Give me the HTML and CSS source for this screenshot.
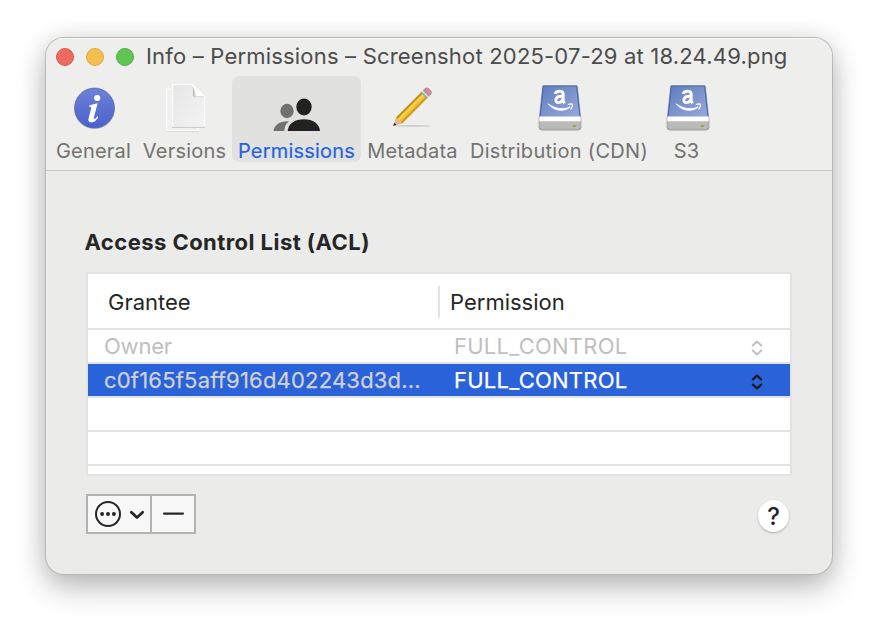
FILE: index.html
```html
<!DOCTYPE html>
<html lang="en">
<head>
<meta charset="utf-8">
<title>Info</title>
<link rel="stylesheet" href="styles.css">
</head>
<body>
<svg width="0" height="0" class="defs" aria-hidden="true">
  <defs>
    <linearGradient id="blue" x1="0" y1="0" x2="0" y2="1"><stop offset="0" stop-color="#6c82d8"/><stop offset="1" stop-color="#4b60cd"/></linearGradient>
    <linearGradient id="paper" x1="0" y1="0" x2="1" y2="1"><stop offset="0" stop-color="#e6e6e6"/><stop offset="1" stop-color="#f3f3f3"/></linearGradient>
    <linearGradient id="top" x1="0" y1="0" x2="1" y2="1"><stop offset="0" stop-color="#5f7cc0"/><stop offset=".5" stop-color="#7d93cd"/><stop offset="1" stop-color="#98a8d9"/></linearGradient>
    <linearGradient id="front" x1="0" y1="0" x2="0" y2="1"><stop offset="0" stop-color="#c4c4c4"/><stop offset="1" stop-color="#b9b9b9"/></linearGradient>
    <linearGradient id="shade" x1="0" y1="0" x2="1" y2="0"><stop offset="0" stop-color="#999" stop-opacity=".8"/><stop offset="1" stop-color="#bbb" stop-opacity="0"/></linearGradient>
    <symbol id="drive" viewBox="0 0 48 48">
      <path d="M3 42q0 3 3 3h36q3 0 3-3" fill="none" stroke="#999" stroke-width="1"/>
      <path d="M6.7 0.8h34.6L45 35v6.5q0 2.8-3 2.8H6q-3 0-3-2.8v-6.5Z" fill="url(#front)" stroke="#8f9296" stroke-width=".6"/>
      <path d="M7 1h34l3.5 31h-41Z" fill="url(#top)"/>
      <path d="M7 1h34" stroke="#4c6297" stroke-width="1"/>
      <path d="M7.2 2 4.2 31M40.8 2l3 29" stroke="#4a68bd" stroke-width="1.2"/>
      <path d="M3.7 31.5h40.6l.5 4.7H3.2Z" fill="#fff"/>
      <ellipse cx="38.3" cy="41" rx="1.8" ry=".9" fill="#999b32"/>
      <path d="M12.2 18.9c6.2 7.6 16.3 8.2 22 3-6.8 3-14.8 2.2-22-3Z" fill="#fff" stroke="#fff" stroke-width=".9" stroke-linejoin="round"/>
      <path d="M32.2 19.4q3.9-1.2 4.2 0t-1.4 4.6" fill="none" stroke="#fff" stroke-width="1.2" stroke-linecap="round"/>
      <path d="M27.2 8.6v6.3q0 1.7 1.4 3.3M27.2 11.3h-2c-6.5.1-6.7 6.3-2.7 6.3 2.6 0 4.7-1.8 4.7-6.3ZM19.3 9.1c.7-4 7.9-4 7.9.2" fill="none" stroke="#fff" stroke-width="2.9"/>
    </symbol>
    <symbol id="updown" viewBox="0 0 12 16"><path d="M1.8 5.5 6 1.6l4.2 3.9M1.8 10.5 6 14.4l4.2-3.9" fill="none" stroke="currentColor" stroke-width="2.1" stroke-linecap="round" stroke-linejoin="round"/></symbol>
  </defs>
</svg>
<main class="window">
  <header class="head">
    <div class="titlebar">
      <i class="light red"></i><i class="light yellow"></i><i class="light green"></i>
      <h1 class="title">Info – Permissions – Screenshot 2025-07-29 at 18.24.49.png</h1>
    </div>
    <nav class="tabs">
      <div class="tab general">
        <svg class="icon" viewBox="0 0 48 56"><circle cx="24.5" cy="32.9" r="20.2" fill="#999" opacity=".6"/><circle cx="24.5" cy="32" r="19.9" fill="url(#blue)" stroke="#5365b5" stroke-width=".8"/><circle cx="27.2" cy="22" r="3.1" fill="#fff"/><path d="M19.3 29.5q3.9-1.2 8.3-2.3l-3.7 14.4q-.4 1.7.6 1.4 1-.3 2.8-2.8l1 .7q-2.8 5.2-6.5 5.4-4.4.2-3.2-4.4l2.7-9.7q.5-1.6-2.2-1.5Z" fill="#fff"/></svg>
        <span>General</span>
      </div>
      <div class="tab versions">
        <svg class="icon" viewBox="0 0 48 56"><path d="M5.5 13.2h31.8v41.5H5.5Z" fill="#f0f0f0" stroke="#fff" stroke-width="1.2"/><path d="M5 55.6h33" stroke="#cfcfcf" stroke-width=".8"/><path d="M11.5 8.5H31l12.5 12v30h-32Z" fill="url(#paper)" stroke="#fff" stroke-width="1.2"/><path d="M11 51.2h33" stroke="#b8b8b8" stroke-width=".9"/><path d="M32 10.5 43 20.5H32Z" fill="#fff"/><path d="M32 20.5V10.5L36 20.5Z" fill="url(#shade)"/><path d="M32 20.7h11" stroke="#ccc" stroke-width=".7"/></svg>
        <span>Versions</span>
      </div>
      <div class="tab permissions active">
        <svg class="icon" viewBox="0 0 48 56"><g fill="#717171"><ellipse cx="15" cy="35" rx="6.7" ry="7.2"/><path d="M1.5 55c.5-6 7-10.2 15.5-9.6-3.4 2.4-4.2 5.2-4.7 9.6Z"/></g><g fill="#212121"><ellipse cx="32" cy="31" rx="7.7" ry="8.5"/><path d="M15.6 55C16.6 47 23 43.2 32 43.2s15.2 4 16 11.8Z"/></g></svg>
        <span>Permissions</span>
      </div>
      <div class="tab metadata">
        <svg class="icon" viewBox="0 0 48 56"><ellipse cx="25" cy="49.9" rx="18" ry=".9" fill="#ccc"/><path d="m8 41.5 6.2 6L5.2 49.8Z" fill="#e2b78f"/><path d="m6.3 46.7 2.3 2.2-3.5 1Z" fill="#333"/><path d="M8 41.5 34 15.4l6 5.8-25.8 26.3Z" fill="#efc035"/><path d="m8 41.5 26-26.1 1.3 1.3L9.4 42.8Z" fill="#c18d21"/><path d="m12.8 46.1 25.8-26.2 1.4 1.3-25.8 26.3Z" fill="#d19a24"/><path d="m11 43.6 25.3-25.5" stroke="#f7da63" stroke-width="1.4"/><path d="m32.7 16.7 3.3-3.3 6.1 6-3.4 3.4Z" fill="#a1a5a5"/><path d="m34.2 15.1 6.2 6.1" stroke="#e8eaea" stroke-width="1.1"/><path d="m35.8 13.6 1.4-1.4q2.3-1.2 4.7 1.2t1.2 4.6l-1.2 1.4Z" fill="#d98ca0" stroke="#a96b7b" stroke-width=".5"/></svg>
        <span>Metadata</span>
      </div>
      <div class="tab distribution"><svg class="icon drive"><use href="#drive"/></svg><span>Distribution (CDN)</span></div>
      <div class="tab s3"><svg class="icon drive"><use href="#drive"/></svg><span>S3</span></div>
    </nav>
  </header>
  <section class="content">
    <h2 class="heading">Access Control List (ACL)</h2>
    <div class="table">
      <div class="row columns"><span class="grantee">Grantee</span><span class="permission">Permission</span></div>
      <div class="row owner"><span class="grantee">Owner</span><span class="permission">FULL_CONTROL</span><svg class="arrows"><use href="#updown"/></svg></div>
      <div class="row selected"><span class="grantee">c0f165f5aff916d402243d3d...</span><span class="permission">FULL_CONTROL</span><svg class="arrows"><use href="#updown"/></svg></div>
      <div class="row"></div>
      <div class="row"></div>
      <div class="last"></div>
    </div>
    <footer class="footer">
      <div class="buttons">
        <button class="more" aria-label="Actions"><svg width="62" height="36" viewBox="0 0 62 36" fill="none" stroke="#262626"><circle cx="20" cy="18" r="12" stroke-width="2"/><g fill="#262626" stroke="none"><circle cx="14.1" cy="18" r="2"/><circle cx="20" cy="18" r="2"/><circle cx="25.9" cy="18" r="2"/></g><path d="m43.3 16.2 5.7 5.3 5.7-5.3" stroke-width="2.7" stroke-linecap="round" stroke-linejoin="round"/></svg></button>
        <button class="remove" aria-label="Remove"><svg width="42" height="36" viewBox="0 0 42 36"><path d="M12 17.6h19" stroke="#262626" stroke-width="2.1" stroke-linecap="round"/></svg></button>
      </div>
      <button class="help">?</button>
    </footer>
  </section>
</main>
</body>
</html>
```
FILE: styles.css
```css
* { box-sizing: border-box; }
body { margin: 0; width: 878px; height: 628px; padding: 38px 46px; overflow: hidden; background: #fff; font-family: Inter, sans-serif; color: #262626; }
h1, h2 { margin: 0; }
button { margin: 0; padding: 0; border: 0; font-family: inherit; color: inherit; }
.defs { position: absolute; }
.window { width: 786px; height: 536px; border-radius: 18px; overflow: hidden; background: #ebebea; box-shadow: 0 0 0 1px #b7b7b7, 0 14px 30px rgba(0,0,0,.24), 0 1px 26px rgba(0,0,0,.13); }
.head { height: 133px; background: #eeeeec; border-bottom: 1px solid #c8c8c8; box-shadow: inset 0 1px #f9f9f9; }
.titlebar { height: 38px; display: flex; align-items: center; padding-left: 10px; gap: 12px; }
.light { flex: none; width: 18px; height: 18px; border-radius: 50%; border: 1px solid; }
.red { background: #ed6a5f; border-color: #d95a50; }
.yellow { background: #f5bf4f; border-color: #dda942; }
.green { background: #61c554; border-color: #53ae47; }
.title { padding-bottom: 2px; font-size: 22px; line-height: 36px; font-weight: 400; letter-spacing: .19px; white-space: nowrap; color: #4c4c4c; }
.tabs { display: flex; height: 86px; padding-left: 4px; }
.tab { flex: none; display: flex; flex-direction: column; align-items: center; border-radius: 7px; color: #727270; font-size: 20px; line-height: 22px; letter-spacing: .2px; white-space: nowrap; }
.icon { flex: none; display: block; width: 48px; height: 56px; margin: 0 0 8px; }
.permissions .icon { margin-right: 1px; }
.metadata .icon { margin-right: 1px; }
.icon.drive { height: 48px; margin: 9px 0 7px 2px; }
.general { width: 87px; }
.versions { width: 95px; }
.permissions { width: 129px; }
.metadata { width: 103px; }
.distribution { width: 190px; letter-spacing: .3px; }
.s3 { width: 65px; }
.active { background: #e1e1df; color: #2763e0; -webkit-text-stroke: .2px; }
.content { padding: 56px 40px 0; }
.heading { font-size: 22px; line-height: 30px; font-weight: 700; margin-left: -1.5px; letter-spacing: .45px; white-space: nowrap; }
.table { width: 706px; height: 204px; margin-top: 15px; border: 2px solid #e3e3e3; background: #fff; }
.row { display: flex; height: 34px; border-bottom: 2px solid #e3e3e3; font-size: 22px; line-height: 33px; align-items: center; white-space: nowrap; }
.grantee { width: 352px; padding-left: 16px; letter-spacing: 0; }
.permission { flex: 1; padding-left: 14px; letter-spacing: .25px; }
.columns { height: 56px; padding-top: 2px; }
.columns .grantee { width: 350px; padding-left: 20px; }
.columns .permission { border-left: 2px solid #e3e3e3; padding-left: 10px; line-height: 32px; letter-spacing: 0; }
.owner { color: #bfbfbf; }
.owner .grantee { letter-spacing: -.2px; }
.selected { color: #fff; background: #2962d9; background-clip: padding-box; -webkit-text-stroke: .25px; }
.selected .grantee { color: #d1d1d1; letter-spacing: .2px; }
.arrows { width: 12px; height: 16px; margin: 3px 27px 0 0; }
.selected .arrows { color: #151515; }
.footer { display: flex; justify-content: space-between; padding: 18px 3px 0 0; }
.buttons { display: flex; height: 40px; border: 2px solid #b3b3b3; background: #f8f8f8; }
.buttons button { display: block; height: 36px; background: transparent; }
.more { width: 62px; }
.buttons .remove { width: 44px; border-left: 2px solid #b3b3b3; }
.help { width: 31px; height: 32px; margin-top: 6px; border-radius: 50%; background: #fff; box-shadow: 0 1px 2px #aaa; font-size: 24px; line-height: 34px; font-weight: 500; }
```
